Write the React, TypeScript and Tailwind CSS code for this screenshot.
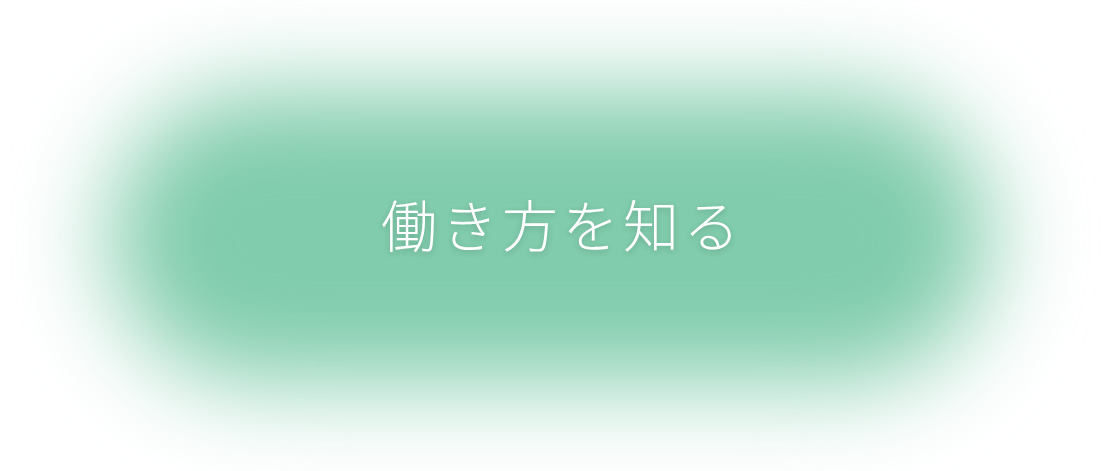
import React from 'react';

export default function App() {
  return (
    <div className="relative flex h-[471px] w-full items-center justify-center overflow-hidden bg-white">
      {/* soft glow behind the label */}
      <div className="pointer-events-none absolute left-[110px] top-[92px] h-[290px] w-[880px] rounded-full bg-[#80ccac] blur-[48px]" />
      <a
        href="#"
        className="relative pb-[26px] pl-[24px] text-[56px] font-light leading-none tracking-[0.08em] text-white [text-shadow:0_2px_6px_rgba(0,0,0,0.18)]"
        style={{ fontFamily: '"Noto Sans CJK JP", "Noto Sans", sans-serif' }}
      >
        働き方を知る
      </a>
    </div>
  );
}
